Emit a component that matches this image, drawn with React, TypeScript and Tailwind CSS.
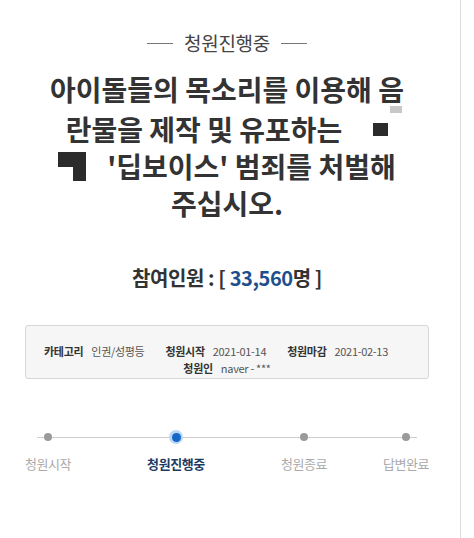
const font = { fontFamily: '"Noto Sans CJK KR", "Noto Sans", sans-serif' };

function Step({ label, active, ml }: { label: string; active?: boolean; ml: string }) {
  return (
    <div className={`relative flex w-[60px] flex-col items-center ${ml}`}>
      <div className="flex h-[16px] items-center justify-center">
        {active ? (
          <div className="flex h-[14px] w-[14px] items-center justify-center rounded-full bg-[#b9d6f5]">
            <div className="h-[9px] w-[9px] rounded-full bg-[#1467c6]" />
          </div>
        ) : (
          <div className="h-[8px] w-[8px] rounded-full bg-[#9a9a9a]" />
        )}
      </div>
      <div
        className={
          active
            ? "mt-[10px] whitespace-nowrap text-[13px] leading-[18px] font-bold tracking-[-0.4px] text-[#1e3a62]"
            : "mt-[10px] whitespace-nowrap text-[13px] leading-[18px] tracking-[-0.4px] text-[#aaaaaa]"
        }
      >
        {label}
      </div>
    </div>
  );
}

export default function App() {
  return (
    <div className="h-[538px] w-[474px] bg-white" style={font}>
      <div className="h-[538px] w-[461px] border-r border-[#dcdcdc]">
        <div className="flex w-[454px] flex-col">
          {/* status header */}
          <div className="flex items-center justify-center gap-[11px] pt-[30px]">
            <div className="h-px w-[26px] bg-[#777]" />
            <div className="text-[19px] leading-[26px] tracking-[-0.3px] text-[#444]">청원진행중</div>
            <div className="h-px w-[26px] bg-[#777]" />
          </div>

          {/* title */}
          <div className="relative mt-[12px] text-center text-[28px] font-bold text-[#333]">
            <div className="leading-[43px]">아이돌들의 목소리를 이용해 음</div>
            <div className="flex items-center justify-center leading-[37px]">
              <span>란물을 제작 및 유포하는</span>
              <span className="ml-[31px] inline-block h-[13px] w-[15px] bg-[#2b2b2b]" />
            </div>
            <div className="flex items-center justify-center leading-[37px]">
              <span className="mr-[21px] flex h-[29px] w-[28px] flex-col items-end">
                <span className="h-[15px] w-[28px] bg-[#2b2b2b]" />
                <span className="h-[14px] w-[13px] bg-[#2b2b2b]" />
              </span>
              <span>'딥보이스' 범죄를 처벌해</span>
            </div>
            <div className="leading-[37px]">주십시오.</div>
            <span className="absolute left-[390px] top-[38px] h-[7px] w-[12px] bg-[#c8c8c8]" />
          </div>

          {/* participants */}
          <div className="mt-[42px] text-center text-[20px] leading-[27px] font-bold tracking-[-0.4px] text-[#333]">
            참여인원 : [ <span className="text-[#1d4f8c]">33,560</span>명 ]
          </div>

          {/* info box */}
          <div className="mx-auto mt-[34px] flex h-[54px] w-[404px] flex-col rounded-[3px] border border-[#d6d6d6] bg-[#f6f6f6] pt-[17px] text-[11px] leading-[17px] tracking-[-0.3px] text-[#555]">
            <div className="flex justify-center gap-[21px] pr-[22px]">
              <div className="flex gap-[8px]">
                <span className="font-bold text-[#333]">카테고리</span>
                <span>인권/성평등</span>
              </div>
              <div className="flex gap-[8px]">
                <span className="font-bold text-[#333]">청원시작</span>
                <span>2021-01-14</span>
              </div>
              <div className="flex gap-[8px]">
                <span className="font-bold text-[#333]">청원마감</span>
                <span>2021-02-13</span>
              </div>
            </div>
            <div className="flex justify-center gap-[8px]">
              <span className="font-bold text-[#333]">청원인</span>
              <span>naver - ***</span>
            </div>
          </div>

          {/* progress */}
          <div className="relative mt-[50px] flex">
            <div className="absolute left-[37px] top-[8px] h-px w-[380px] bg-[#cccccc]" />
            <Step label="청원시작" ml="ml-[18px]" />
            <Step label="청원진행중" active ml="ml-[68px]" />
            <Step label="청원종료" ml="ml-[68px]" />
            <Step label="답변완료" ml="ml-[42px]" />
          </div>
        </div>
      </div>
    </div>
  );
}
